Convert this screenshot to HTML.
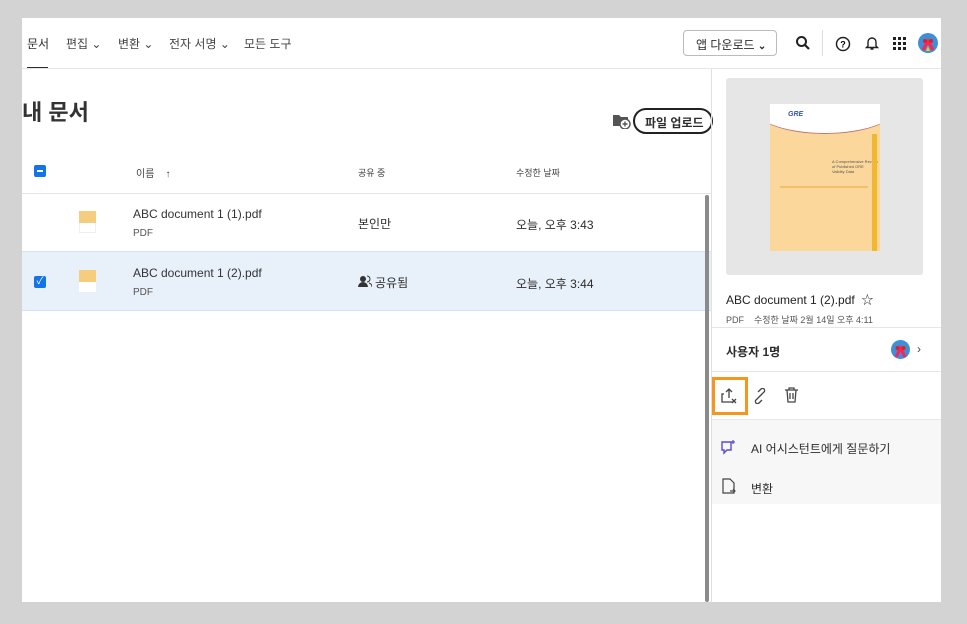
<!DOCTYPE html>
<html><head><meta charset="utf-8"><style>
*{margin:0;padding:0;box-sizing:border-box}
body{width:967px;height:624px;background:#d3d3d3;font-family:"Liberation Sans","Noto Sans CJK KR",sans-serif;color:#2c2c2c;position:relative;overflow:hidden}
.a{position:absolute}
.main{left:22px;top:18px;width:919px;height:584px;background:#fff}
.t{position:absolute;white-space:nowrap}
</style></head><body>
<div class="a main"></div>
<!-- top nav -->
<div class="t" style="left:27px;top:35px;font-size:12px">문서</div>
<div class="a" style="left:27px;top:67px;width:21px;height:2px;background:#2c2c2c"></div>
<div class="t" style="left:66px;top:35px;font-size:12px;color:#444">편집 ⌄</div>
<div class="t" style="left:118px;top:35px;font-size:12px;color:#444">변환 ⌄</div>
<div class="t" style="left:169px;top:35px;font-size:12px;color:#444">전자 서명 ⌄</div>
<div class="t" style="left:244px;top:35px;font-size:12px;color:#444">모든 도구</div>
<div class="a" style="left:22px;top:68px;width:919px;height:1px;background:#e6e6e6"></div>
<div class="a" style="left:683px;top:30px;width:94px;height:26px;border:1px solid #bbb;border-radius:4px;font-size:12px;padding:5px 0 0 12px">앱 다운로드 <b style="font-size:10px">⌄</b></div>
<svg class="a" style="left:795px;top:35px" width="16" height="16"><circle cx="6.5" cy="6.5" r="4.5" fill="none" stroke="#222" stroke-width="2"/><path d="M10 10L14 14" stroke="#222" stroke-width="2.2"/></svg>
<div class="a" style="left:822px;top:30px;width:1px;height:26px;background:#ddd"></div>
<svg class="a" style="left:835px;top:36px" width="16" height="16"><circle cx="8" cy="8" r="6.5" fill="none" stroke="#222" stroke-width="1.5"/><text x="8" y="11.5" font-size="9" text-anchor="middle" font-family="Liberation Sans" font-weight="bold">?</text></svg>
<svg class="a" style="left:864px;top:35px" width="16" height="16"><path d="M4 11V7a4 4 0 0 1 8 0v4l1.5 1.5h-11z M6.5 14h3" fill="none" stroke="#222" stroke-width="1.4"/></svg>
<svg class="a" style="left:893px;top:37px" width="14" height="14" fill="#222"><rect x="0" y="0" width="3" height="3"/><rect x="5" y="0" width="3" height="3"/><rect x="10" y="0" width="3" height="3"/><rect x="0" y="5" width="3" height="3"/><rect x="5" y="5" width="3" height="3"/><rect x="10" y="5" width="3" height="3"/><rect x="0" y="10" width="3" height="3"/><rect x="5" y="10" width="3" height="3"/><rect x="10" y="10" width="3" height="3"/></svg>
<svg class="a" style="left:918px;top:33px" width="20" height="20"><circle cx="10" cy="10" r="10" fill="#3f8fd8"/><path d="M5 17L10 8L15 17" stroke="#f25" stroke-width="3" fill="none"/><circle cx="7" cy="8" r="2" fill="#d22"/><circle cx="13" cy="8" r="2" fill="#d22"/><path d="M8 18L10 13L12 18z" fill="#fc0"/></svg>
<!-- title -->
<div class="t" style="left:22px;top:95px;font-size:22px;font-weight:bold;color:#333">내 문서</div>
<svg class="a" style="left:612px;top:113px" width="19" height="16"><path d="M1 2h6l2 2h7v9H1z" fill="#555"/><circle cx="13" cy="11" r="5" fill="#fff" stroke="#555" stroke-width="1.4"/><path d="M13 8.5v5M10.5 11h5" stroke="#555" stroke-width="1.4"/></svg>
<div class="a" style="left:633px;top:108px;width:80px;height:26px;border:2px solid #222;border-radius:14px;font-size:12px;font-weight:bold;padding:4px 0 0 10px">파일 업로드</div>
<!-- table header -->
<div class="a" style="left:34px;top:165px;width:12px;height:12px;background:#1473e6;border-radius:2px"></div>
<div class="a" style="left:37px;top:170px;width:6px;height:2px;background:#fff"></div>
<div class="t" style="left:136px;top:165px;font-size:10px;color:#444">이름 &nbsp;&nbsp; ↑</div>
<div class="t" style="left:358px;top:166px;font-size:9px;color:#444">공유 중</div>
<div class="t" style="left:516px;top:166px;font-size:9px;color:#444">수정한 날짜</div>
<div class="a" style="left:22px;top:193px;width:690px;height:1px;background:#e3e3e3"></div>
<!-- row1 -->
<div class="a" style="left:79px;top:211px;width:17px;height:22px;background:#fff;border:1px solid #eee"></div>
<div class="a" style="left:79px;top:211px;width:17px;height:12px;background:#f6cd7f"></div>
<div class="t" style="left:133px;top:207px;font-size:12px;color:#333">ABC document 1 (1).pdf</div>
<div class="t" style="left:133px;top:228px;font-size:10px;color:#555">PDF</div>
<div class="t" style="left:358px;top:215px;font-size:12px">본인만</div>
<div class="t" style="left:516px;top:216px;font-size:12px">오늘, 오후 3:43</div>
<div class="a" style="left:22px;top:251px;width:690px;height:60px;background:#e8f0fa;border-top:1px solid #d5e2f3;border-bottom:1px solid #d5e2f3"></div>
<div class="a" style="left:34px;top:276px;width:12px;height:12px;background:#1473e6;border-radius:2px;color:#fff;font-size:10px;line-height:12px;text-align:center">✓</div>
<div class="a" style="left:79px;top:270px;width:17px;height:22px;background:#fff"></div>
<div class="a" style="left:79px;top:270px;width:17px;height:12px;background:#f6cd7f"></div>
<div class="t" style="left:133px;top:266px;font-size:12px;color:#333">ABC document 1 (2).pdf</div>
<div class="t" style="left:133px;top:287px;font-size:10px;color:#555">PDF</div>
<svg class="a" style="left:358px;top:275px" width="14" height="13"><circle cx="5" cy="4" r="3" fill="#333"/><path d="M0 12a5 5 0 0 1 10 0z" fill="#333"/><path d="M9 1a3 3 0 0 1 0 6M11 8a4 4 0 0 1 3 4" stroke="#333" fill="none"/></svg>
<div class="t" style="left:375px;top:274px;font-size:12px">공유됨</div>
<div class="t" style="left:516px;top:275px;font-size:12px">오늘, 오후 3:44</div>
<div class="a" style="left:705px;top:195px;width:4px;height:407px;background:#8a8a8a;border-radius:2px"></div>
<!-- sidebar -->
<div class="a" style="left:711px;top:69px;width:1px;height:533px;background:#e0e0e0"></div>
<div class="a" style="left:726px;top:78px;width:197px;height:197px;background:#e6e6e6;border-radius:3px"></div>
<div class="a" style="left:770px;top:104px;width:110px;height:147px;background:#fbd79c;overflow:hidden">
<div class="a" style="left:-20px;top:-30px;width:150px;height:60px;background:#fff;border-radius:0 0 50% 50%;border-bottom:1px solid #b77"></div>
<div class="t" style="left:18px;top:7px;font-size:7px;color:#35a;font-style:italic;font-weight:bold">GRE</div>
<div class="t" style="left:62px;top:55px;font-size:4px;color:#555;line-height:5px">A Comprehensive Review<br>of Published GRE<br>Validity Data</div>
<div class="a" style="left:10px;top:82px;width:88px;height:2px;background:#f3c068"></div>
<div class="a" style="left:102px;top:30px;width:5px;height:117px;background:#f0b830"></div>
</div>
<div class="t" style="left:726px;top:291px;font-size:12px;color:#222">ABC document 1 (2).pdf &nbsp;☆</div>
<div class="t" style="left:726px;top:313px;font-size:9px;color:#555">PDF &nbsp;&nbsp; 수정한 날짜 2월 14일 오후 4:11</div>
<div class="a" style="left:712px;top:327px;width:229px;height:1px;background:#e6e6e6"></div>
<div class="t" style="left:726px;top:343px;font-size:12px;font-weight:bold">사용자 1명</div>
<svg class="a" style="left:891px;top:340px" width="19" height="19"><circle cx="9.5" cy="9.5" r="9.5" fill="#3f8fd8"/><path d="M5 17L9.5 8L14 17" stroke="#f25" stroke-width="3" fill="none"/><circle cx="6.5" cy="8" r="2" fill="#d22"/><circle cx="12.5" cy="8" r="2" fill="#d22"/></svg>
<div class="t" style="left:917px;top:342px;font-size:12px;color:#444">›</div>
<div class="a" style="left:712px;top:371px;width:229px;height:1px;background:#e6e6e6"></div>
<div class="a" style="left:712px;top:377px;width:36px;height:38px;border:3px solid #f5961e"></div>
<svg class="a" style="left:720px;top:387px" width="18" height="18" fill="none" stroke="#444" stroke-width="1.3"><path d="M4 7H2v8h11M9 11V2M6 5l3-3 3 3M12 12l4 4M16 12l-4 4"/></svg>
<svg class="a" style="left:752px;top:388px" width="16" height="16" fill="none" stroke="#444" stroke-width="1.3"><path d="M7 9l-3 3a2 2 0 0 0 3 3l3-3M9 7l3-3a2 2 0 0 0-3-3L6 4M6 10l4-4"/></svg>
<svg class="a" style="left:784px;top:387px" width="15" height="16" fill="none" stroke="#444" stroke-width="1.3"><path d="M1 3h13M5 3V1h5v2M3 3l1 12h7l1-12M6 6v6M9 6v6"/></svg>
<div class="a" style="left:712px;top:419px;width:229px;height:1px;background:#e6e6e6"></div>
<div class="a" style="left:712px;top:420px;width:229px;height:84px;background:#f7f7f7"></div>
<svg class="a" style="left:720px;top:439px" width="16" height="16" fill="none" stroke="#5b4bd6" stroke-width="1.4"><path d="M2 3h9v8H7l-3 3v-3H2z"/><path d="M13 1v4M11 3h4" stroke-width="1.2"/></svg>
<div class="t" style="left:751px;top:440px;font-size:12px">AI 어시스턴트에게 질문하기</div>
<svg class="a" style="left:721px;top:478px" width="15" height="17" fill="none" stroke="#444" stroke-width="1.2"><path d="M2 1h7l4 4v10H2z M9 13h5M12 11l2 2-2 2"/></svg>
<div class="t" style="left:751px;top:480px;font-size:12px">변환</div>
</body></html>
